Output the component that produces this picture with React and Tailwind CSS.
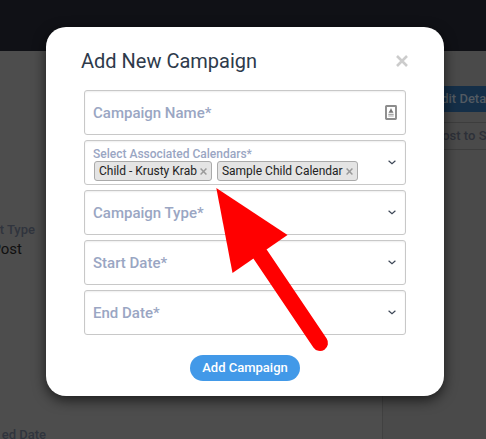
import { useState } from "react";

const Chevron = () => (
  <svg width="8" height="5" viewBox="0 0 8 5" fill="none" className="shrink-0">
    <path d="M0.6 0.7 L4 3.6 L7.4 0.7" stroke="#3c4656" strokeWidth="1.2" />
  </svg>
);

const ContactIcon = () => (
  <svg width="12" height="15" viewBox="0 0 12 15" fill="none" className="shrink-0">
    <rect x="1" y="1" width="10" height="13" rx="0.5" stroke="#8c8c8c" strokeWidth="1.9" />
    <path d="M6 3 L7 5.2 L8.5 7.8 H3.5 L5 5.2 Z" fill="#777777" />
    <path d="M3.3 9.3 H8.7 M3.3 11 H8.7" stroke="#a8a8a8" strokeWidth="1.2" />
  </svg>
);

const CloseIcon = ({ size, color, width }) => (
  <svg width={size} height={size} viewBox="0 0 12 12" fill="none" className="block shrink-0">
    <path d="M1 1 L11 11 M11 1 L1 11" stroke={color} strokeWidth={width} />
  </svg>
);

const Field = ({ label, icon }) => (
  <div className="flex h-[45px] items-center justify-between rounded-[3px] border border-[#c8c8c8] bg-white pl-2 shadow-[inset_0_1px_2px_rgba(0,0,0,0.07)]">
    <span className="text-[15px] leading-5 font-medium text-[#9aa6c3]">{label}</span>
    <div className={icon ? "pr-2" : "pr-[9px]"}>{icon || <Chevron />}</div>
  </div>
);

const Tag = ({ name, onRemove }) => (
  <span className="flex h-5 items-center gap-[3px] rounded-[3px] border border-[#aaaaaa] bg-[#e4e4e4] pr-[4px] pl-1 text-[12px] leading-[18px] whitespace-nowrap text-[#222222]">
    {name}
    <button type="button" onClick={onRemove} aria-label="Remove" className="pt-px">
      <CloseIcon size={7} color="#999999" width={2.6} />
    </button>
  </span>
);

// Page that sits behind the dialog
const Backdrop = () => (
  <div className="flex h-full flex-col">
    <div className="h-[51px] shrink-0 bg-[#101116]"></div>
    <div className="flex min-h-0 flex-1">
      <div className="flex w-[383px] flex-col border-r border-[#414141] bg-[#4d4d4d] pt-[170px]">
        <p className="flex w-[35px] justify-end text-[13px] leading-[18px] font-medium whitespace-nowrap text-[#30343d]">
          t Type
        </p>
        <p className="flex w-[22px] justify-end text-[15px] leading-5 whitespace-nowrap text-[#101010]">
          Post
        </p>
        <p className="mt-[167px] flex w-[46px] justify-end text-[13px] leading-[18px] font-medium whitespace-nowrap text-[#30343d]">
          ed Date
        </p>
      </div>
      <div className="flex-1 overflow-hidden bg-[#4a4a4a] pt-[35px] pl-8">
        <div className="flex h-[26px] w-[120px] items-center bg-[#152f48] pl-[19px] text-[13px] font-medium whitespace-nowrap text-[#525a62]">
          Edit Details
        </div>
        <div className="mt-[10px] flex h-7 w-[120px] items-center border border-[#3d3d3d] pl-[18px] text-[13px] font-medium whitespace-nowrap text-[#2d3038]">
          Post to Social
        </div>
      </div>
    </div>
  </div>
);

const App = () => {
  const [calendars, setCalendars] = useState(["Child - Krusty Krab", "Sample Child Calendar"]);

  const removeCalendar = (name) => {
    setCalendars((prev) => prev.filter((c) => c !== name));
  };

  return (
    <div className="relative h-[439px] w-[486px] overflow-hidden font-['Roboto',sans-serif]">
      <Backdrop />

      {/* Dialog */}
      <div className="absolute top-[27px] left-[46px] flex h-[369px] w-[398px] flex-col rounded-[20px] bg-white px-[38px] shadow-[0_4px_13px_rgba(0,0,0,0.65)]">
        <div className="-ml-[3px] flex h-[63px] items-center justify-between pt-[5px]">
          <h2 className="text-[20px] leading-6 text-[#2e3a4b]">Add New Campaign</h2>
          <button type="button" aria-label="Close" className="-mr-[2px]">
            <CloseIcon size={12} color="#cccccc" width={2.6} />
          </button>
        </div>

        <div className="flex flex-col gap-[5px]">
          <Field label="Campaign Name*" icon={<ContactIcon />} />

          <div className="flex h-[45px] items-center justify-between rounded-[3px] border border-[#c8c8c8] pr-[9px] pl-2 shadow-[inset_0_1px_2px_rgba(0,0,0,0.07)]">
            <div className="flex flex-col pt-[3px]">
              <span className="text-[12px] leading-[14px] font-medium text-[#9aa6c3]">
                Select Associated Calendars*
              </span>
              <div className="flex h-5 gap-[5px] pl-px">
                {calendars.map((name) => (
                  <Tag key={name} name={name} onRemove={() => removeCalendar(name)} />
                ))}
              </div>
            </div>
            <Chevron />
          </div>

          <Field label="Campaign Type*" />
          <Field label="Start Date*" />
          <Field label="End Date*" />
        </div>

        <button
          type="button"
          className="mt-5 h-[26px] w-[110px] self-center rounded-full bg-[#4299e8] text-[13px] leading-[26px] font-medium whitespace-nowrap text-white"
        >
          Add Campaign
        </button>
      </div>

      {/* Arrow pointing at the selected calendars */}
      <svg className="pointer-events-none absolute inset-0" width="486" height="439" viewBox="0 0 486 439">
        <path d="M216.3 188 L287.5 235 L232.5 273 Z" fill="#ff0000" />
        <path d="M260 254 L320 343" stroke="#ff0000" strokeWidth="16" strokeLinecap="round" />
      </svg>
    </div>
  );
};

export default App;
